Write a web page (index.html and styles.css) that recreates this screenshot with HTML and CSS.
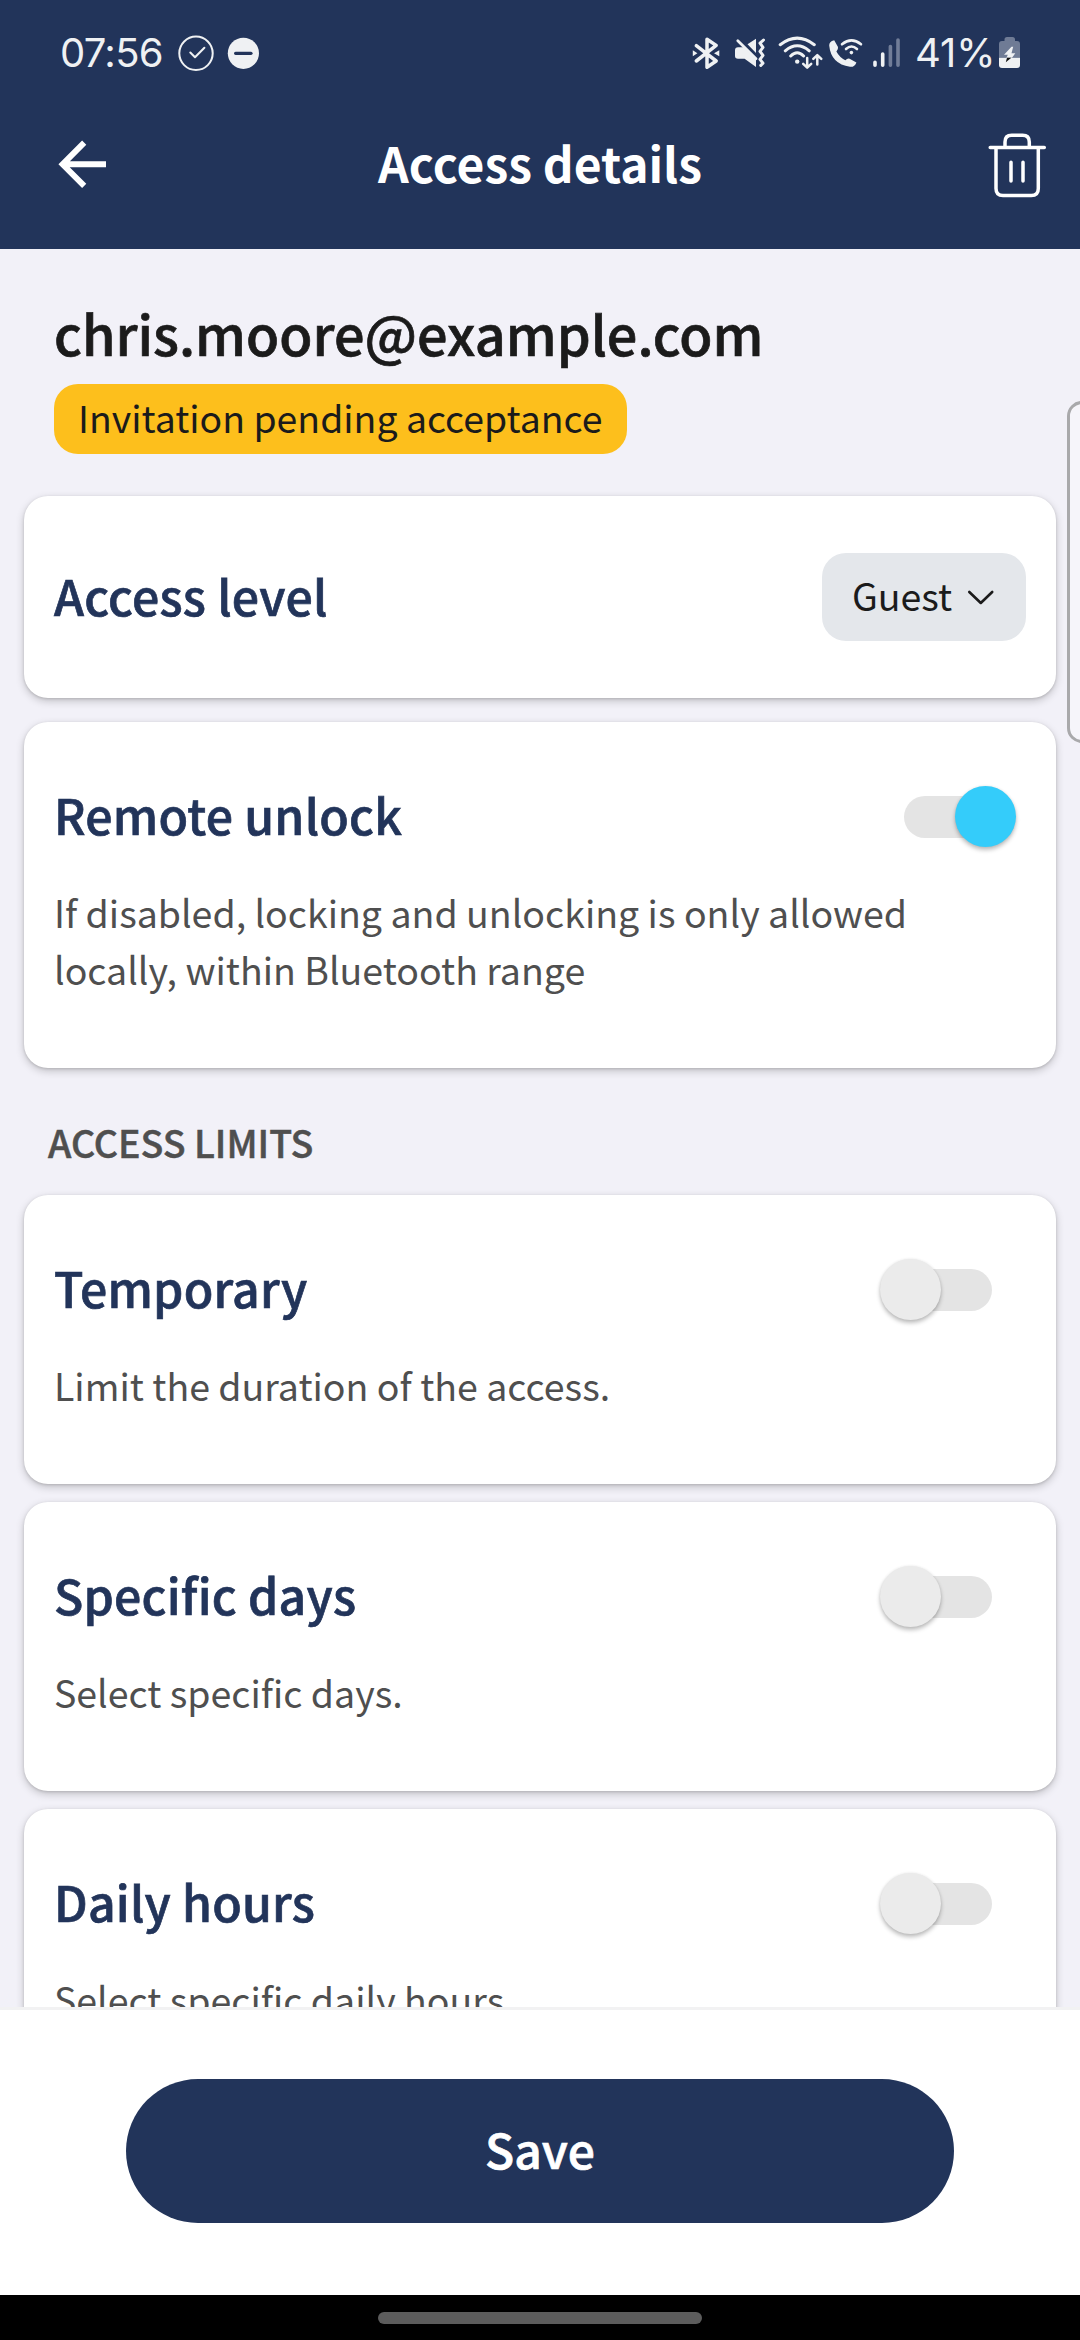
FILE: index.html
```html
<!DOCTYPE html>
<html lang="en">
<head>
<meta charset="utf-8">
<title>Access details</title>
<link rel="stylesheet" href="styles.css">
</head>
<body>
<div class="screen">
  <header class="top">
    <div class="status">
      <div class="status-left">
        <span class="time">07:56</span>
        <svg width="48" height="44" viewBox="172 31 48 44" fill="none" stroke="#eff1f3" stroke-linecap="round" stroke-linejoin="round"><circle cx="196" cy="53.3" r="16.7" stroke-width="2"/><path d="M190.3 52.5 195 57.3 204.4 47.7" stroke-width="2"/></svg>
        <svg width="44" height="44" viewBox="220 31 44 44"><circle cx="243.4" cy="53.3" r="15.6" fill="#eff1f3"/><path d="M235.6 53.3H251" stroke="#22345a" stroke-width="3.2" stroke-linecap="round"/></svg>
      </div>
      <div class="status-right">
        <svg width="38" height="44" viewBox="690 31 38 44"><path d="M696.3 45.7 716.2 61 707 67.2V39.3L716.2 45.4 696.3 61" fill="none" stroke="#eff1f3" stroke-width="3.5" stroke-linecap="round" stroke-linejoin="round"/><path d="M692.8 50.3 697.4 53.2 692.8 56.2ZM719.3 50.3 714 53.2 719.3 56.2Z" fill="#eff1f3"/></svg>
        <svg width="44" height="44" viewBox="728 31 44 44"><path d="M738 47.3H743.3L756 59.8V67L744.6 58.8H738Q735 58.8 735 56V50.2Q735 47.3 738 47.3ZM747.5 44.3 756 38.7V53Z" fill="#eff1f3"/><path d="M737.8 40.7 756 58.8" stroke="#eff1f3" stroke-width="2.8" stroke-linecap="round"/><path d="M763.5 40 760 43.2 763 47.4 760 51.4 763 55.4 760 59.4 763 63.2 760.8 65.4" fill="none" stroke="#eff1f3" stroke-width="3" stroke-linecap="round" stroke-linejoin="round"/></svg>
        <svg width="52" height="44" viewBox="772 31 52 44" fill="none" stroke="#eff1f3" stroke-linecap="round" stroke-linejoin="round"><g stroke-width="3"><path d="M780.2 44.7Q797.2 31.5 814.3 44.7M785.3 50.8Q797.2 40.7 809.2 50.8M790.7 56Q797.2 49.4 803.6 56"/></g><circle cx="797.2" cy="61.6" r="2.2" fill="#eff1f3" stroke="none"/><path d="M807.2 58V67.3M803.2 63.8 807.2 67.6 811.2 63.8M817.3 64.6V55.3M813.3 58.9 817.3 55.1 821.3 58.9" stroke-width="2.5"/></svg>
        <svg width="44" height="44" viewBox="824 31 44 44"><path d="M829.2 45.5Q829 41.6 834.2 40.2L838 47Q838.5 49 836.4 51.4 839.5 57.3 845.4 60.2 847.6 58 849.6 58.8L856.4 62.4Q854.6 67.3 850 66.8 831 64 829.2 45.5Z" fill="#eff1f3"/><path d="M842 44.3Q851.5 36.6 861 44.3M846 49Q851.5 44 857 49" fill="none" stroke="#eff1f3" stroke-width="2.6" stroke-linecap="round"/><circle cx="851.4" cy="52.6" r="1.8" fill="#eff1f3"/></svg>
        <svg width="38" height="44" viewBox="868 31 38 44" stroke="#eff1f3" stroke-width="3.6" stroke-linecap="round"><path d="M875 62.3V65.3M882.7 54V65.3"/><path d="M890.4 46.5V65.3M898 40V65.3" stroke="#717d98"/></svg>
        <span class="percent">41%</span>
        <svg width="26" height="44" viewBox="996 31 26 44"><path d="M1004.5 41V39.5Q1004.5 37 1007 37H1012.5Q1015 37 1015 39.5V41H1017Q1020 41 1020 44V57.7H999V44Q999 41 1002 41Z" fill="#6f7b95"/><path d="M999 57.7H1020V65Q1020 68 1017 68H1002Q999 68 999 65Z" fill="#eff1f3"/><path d="M1011.5 46.7 1004 54.8H1007.8L1006.5 57.7H1012L1015.3 53.2H1011.5L1013.2 46.7Z" fill="#eff1f3"/><path d="M1007 57.7 1005.8 62.3 1011.3 57.7Z" fill="#111"/></svg>
      </div>
    </div>
    <div class="appbar">
      <svg width="60" height="70" viewBox="54 129.5 60 70" fill="none" stroke="#fff" stroke-width="5.9"><path d="M84.2 142.2 62.6 163.8 84.2 185.4M63 163.8H106"/></svg>
      <h1>Access details</h1>
      <svg width="60" height="70" viewBox="987 129.5 60 70" fill="none" stroke="#fff" stroke-width="3.5" stroke-linecap="round"><path d="M990.2 147H1044.3M1005 146V141.5Q1005 134.8 1011.7 134.8H1022.6Q1029.3 134.8 1029.3 141.5V146M996 148V188Q996 195 1003 195H1031.3Q1038.3 195 1038.3 188V148M1011 161.7V180.5M1023 161.7V180.5"/></svg>
    </div>
  </header>

  <main class="content">
    <section class="person">
      <div class="email">chris.moore@example.com</div>
      <div class="badge">Invitation pending acceptance</div>
    </section>

    <section class="card level">
      <h2>Access level</h2>
      <div class="select"><span>Guest</span><svg width="30" height="20" viewBox="0 0 30 20" fill="none" stroke="#1b1b1b" stroke-width="2.6" stroke-linecap="round" stroke-linejoin="round"><path d="M3.3 5 14.8 16 26.2 5"/></svg></div>
    </section>

    <section class="card remote">
      <div class="row"><h2>Remote unlock</h2><div class="switch on"><i></i></div></div>
      <p>If disabled, locking and unlocking is only allowed<br>locally, within Bluetooth range</p>
    </section>

    <h3>ACCESS LIMITS</h3>

    <section class="card limit">
      <div class="row"><h2>Temporary</h2><div class="switch"><i></i></div></div>
      <p>Limit the duration of the access.</p>
    </section>
    <section class="card limit">
      <div class="row"><h2>Specific days</h2><div class="switch"><i></i></div></div>
      <p>Select specific days.</p>
    </section>
    <section class="card limit">
      <div class="row"><h2>Daily hours</h2><div class="switch"><i></i></div></div>
      <p>Select specific daily hours.</p>
    </section>
    <div class="edge-handle"></div>
  </main>

  <footer class="footer"><button class="save">Save</button></footer>
  <div class="nav"><span></span></div>
</div>
</body>
</html>
```
FILE: styles.css
```css
* { box-sizing: border-box; }
body { margin: 0; background: #000; }
h1, h2, h3, p { margin: 0; font-weight: 400; }
svg { display: block; flex: none; }

.screen {
  width: 1080px;
  height: 2340px;
  display: flex;
  flex-direction: column;
  overflow: hidden;
  background: #f2f1f8;
  font-family: "Noto Sans CJK SC", "Noto Sans", sans-serif;
  color: #1b1b1b;
  white-space: nowrap;
}

.top { height: 249px; flex: none; background: #22345a; color: #fff; }
.status {
  height: 80px;
  padding: 26px 58px 0 60px;
  display: flex;
  justify-content: space-between;
  align-items: center;
  font-family: Inter, Roboto, sans-serif;
  font-size: 40px;
  line-height: 54px;
  color: #eff1f3;
}
.status-left, .status-right { display: flex; align-items: center; }
.time { width: 112px; letter-spacing: -0.7px; }
.percent { width: 90px; padding-left: 9px; }

.appbar {
  height: 169px;
  padding: 0 33px 0 54px;
  display: flex;
  align-items: center;
  justify-content: space-between;
}
.appbar h1 {
  font-size: 48px;
  line-height: 60px;
  font-weight: 700;
  padding: 0 21px 5px 0;
}

.content { position: relative; height: 1758px; flex: none; overflow: hidden; padding: 47px 24px 0; }
.person { padding-left: 30px; height: 200px; }
.email {
  height: 88px;
  font-size: 54px;
  line-height: 73px;
  font-weight: 500;
  -webkit-text-stroke: 0.7px currentColor;
}
.badge {
  width: 573px;
  height: 70px;
  padding-left: 24px;
  border-radius: 24px;
  background: #fdbf1c;
  font-size: 37.4px;
  line-height: 67px;
}

.card {
  margin-bottom: 24px;
  padding: 0 30px;
  border-radius: 24px;
  background: #fff;
  box-shadow: 0 3px 9px rgba(0, 0, 0, 0.2), 0 1px 3px rgba(0, 0, 0, 0.14);
}
.card h2 {
  padding-bottom: 5px;
  font-size: 48.2px;
  line-height: 60px;
  font-weight: 500;
  letter-spacing: 0.22px;
  color: #22345a;
  -webkit-text-stroke: 0.7px currentColor;
}
.card p { padding-top: 34px; font-size: 37.5px; line-height: 57px; color: #4f4f4f; }
.level { height: 202px; display: flex; align-items: center; justify-content: space-between; }
.remote { height: 346px; padding-top: 62px; margin-bottom: 45px; }
.limit { height: 289px; padding-top: 62px; margin-bottom: 18px; }
.row { display: flex; height: 65px; align-items: center; justify-content: space-between; }

.select {
  width: 204px;
  height: 88px;
  padding: 0 30px;
  display: flex;
  align-items: center;
  justify-content: space-between;
  border-radius: 24px;
  background: #e4e7eb;
  font-size: 37.5px;
  line-height: 60px;
}
.select span { padding-bottom: 4px; }

.switch {
  position: relative;
  display: flex;
  align-items: center;
  width: 112px;
  height: 61px;
  margin-right: 34px;
}
.switch::before {
  content: "";
  width: 100px;
  height: 42px;
  margin-left: 12px;
  border-radius: 21px;
  background: #e4e4e4;
}
.switch i {
  position: absolute;
  left: 0;
  top: 0;
  width: 61px;
  height: 61px;
  border-radius: 50%;
  background: #ebebeb;
  box-shadow: 0 3px 4px rgba(0, 0, 0, 0.25), 0 0 3px rgba(0, 0, 0, 0.08);
}
.switch.on { margin-right: 10px; }
.switch.on::before { margin-left: 0; }
.switch.on i { left: auto; right: 0; background: #34ccfa; }

.content h3 {
  padding-left: 24px;
  margin-bottom: 25px;
  font-size: 37.5px;
  line-height: 57px;
  font-weight: 500;
  color: #4f4f4f;
  -webkit-text-stroke: 0.5px currentColor;
}

.edge-handle {
  position: absolute;
  left: 1067px;
  top: 152px;
  width: 30px;
  height: 342px;
  border: 3px solid #a9a9ab;
  border-radius: 15px;
  background: rgba(255, 255, 255, 0.3);
}

.footer {
  height: 288px;
  flex: none;
  border-top: 3px solid #f2f2f3;
  padding: 69px 126px 0;
  background: #fff;
}
.save {
  display: block;
  width: 828px;
  height: 144px;
  padding: 0 0 6px;
  border: 0;
  border-radius: 72px;
  background: #22345a;
  color: #fff;
  font: 500 48px/60px "Noto Sans CJK SC", "Noto Sans", sans-serif;
  -webkit-text-stroke: 0.7px currentColor;
}
.nav { height: 45px; flex: none; padding-top: 17px; background: #000; }
.nav span { display: block; width: 324px; height: 12px; margin: 0 auto; border-radius: 6px; background: #5c5c5c; }
```
